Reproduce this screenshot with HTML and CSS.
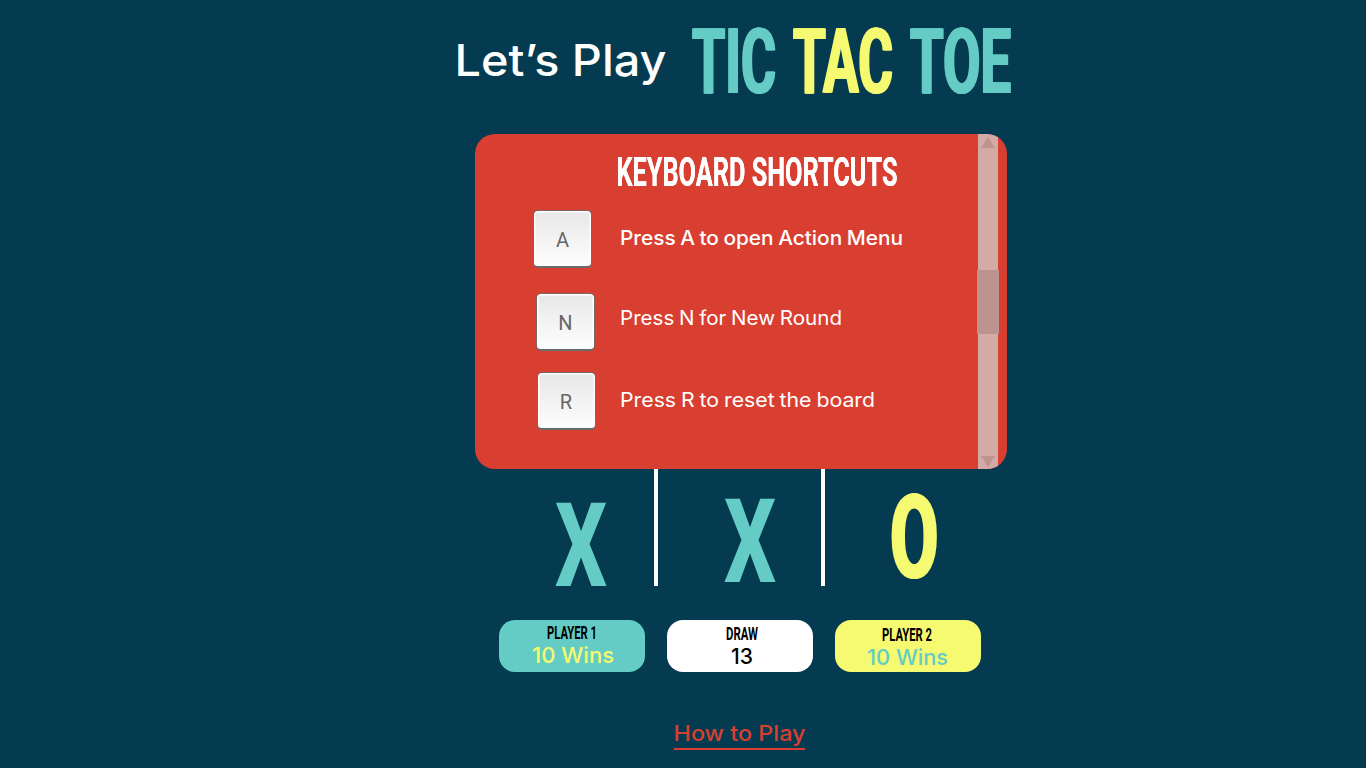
FILE: index.html
```html
<!DOCTYPE html>
<html lang="en">
<head>
<meta charset="utf-8">
<title>Tic Tac Toe</title>
<link rel="stylesheet" href="styles.css">
</head>
<body>
<main class="game">
  <header class="header">
    <svg class="greeting" viewBox="0 0 212 134"><text x="-1.5" y="76" textLength="212" lengthAdjust="spacingAndGlyphs">Let’s Play</text></svg>
    <svg class="logo display" viewBox="0 0 320 134">
      <text class="teal" x="0" y="93" textLength="84" lengthAdjust="spacingAndGlyphs">TIC</text>
      <text class="yellow" x="101" y="93" textLength="100" lengthAdjust="spacingAndGlyphs">TAC</text>
      <text class="teal" x="218" y="93" textLength="101" lengthAdjust="spacingAndGlyphs">TOE</text>
    </svg>
  </header>
  <section class="panel">
    <div class="content">
      <svg class="panel-title display" viewBox="0 0 282 76"><text x="-.5" y="52" textLength="281" lengthAdjust="spacingAndGlyphs">KEYBOARD SHORTCUTS</text></svg>
      <div class="shortcut first">
        <kbd class="key">A</kbd>
        <svg class="hint medium" viewBox="0 0 290 58"><text x="0" y="35" textLength="283" lengthAdjust="spacingAndGlyphs">Press A to open Action Menu</text></svg>
      </div>
      <div class="shortcut second">
        <kbd class="key">N</kbd>
        <svg class="hint" viewBox="0 0 290 58"><text x="0" y="32" textLength="222" lengthAdjust="spacingAndGlyphs">Press N for New Round</text></svg>
      </div>
      <div class="shortcut third">
        <kbd class="key">R</kbd>
        <svg class="hint" viewBox="0 0 290 58"><text x="0" y="35" textLength="255" lengthAdjust="spacingAndGlyphs">Press R to reset the board</text></svg>
      </div>
    </div>
    <div class="scrollbar">
      <svg class="arrow" viewBox="0 0 14 12"><path d="M7 1 14 12H0Z"/></svg>
      <div class="thumb"></div>
      <svg class="arrow" viewBox="0 0 14 12"><path d="M0 0H14L7 11Z"/></svg>
    </div>
  </section>
  <section class="board">
    <div class="cell left"><svg class="mark display" viewBox="0 0 52 117"><text class="teal" x="0" y="117" textLength="52" lengthAdjust="spacingAndGlyphs">X</text></svg></div>
    <div class="cell middle"><svg class="mark display" viewBox="0 0 52 117"><text class="teal" x="0" y="113" textLength="52" lengthAdjust="spacingAndGlyphs">X</text></svg></div>
    <div class="cell right"><svg class="mark round display" viewBox="0 0 52 117"><text class="yellow" x="-2" y="109" textLength="48.5" lengthAdjust="spacingAndGlyphs">O</text></svg></div>
  </section>
  <section class="scores">
    <svg class="score p1" viewBox="0 0 146 52"><text class="name" x="48" y="19" textLength="50" lengthAdjust="spacingAndGlyphs">PLAYER 1</text><text class="value" x="33" y="43" textLength="82" lengthAdjust="spacingAndGlyphs">10 Wins</text></svg>
    <svg class="score draw" viewBox="0 0 146 52"><text class="name" x="59" y="20" textLength="32" lengthAdjust="spacingAndGlyphs">DRAW</text><text class="value" x="64" y="44" textLength="22" lengthAdjust="spacingAndGlyphs">13</text></svg>
    <svg class="score p2" viewBox="0 0 146 52"><text class="name" x="47" y="21" textLength="50" lengthAdjust="spacingAndGlyphs">PLAYER 2</text><text class="value" x="32" y="45" textLength="81" lengthAdjust="spacingAndGlyphs">10 Wins</text></svg>
  </section>
  <a class="help"><svg viewBox="0 0 131 36"><text x="-.5" y="29" textLength="132" lengthAdjust="spacingAndGlyphs">How to Play</text></svg></a>
</main>
</body>
</html>
```
FILE: styles.css
```css
* { box-sizing: border-box; }
body { margin: 0; background: #053b50; font-family: Inter, "Open Sans", sans-serif; }
svg { display: block; flex: none; overflow: visible; }
.game { width: 1366px; height: 768px; overflow: hidden; }
.header { display: flex; height: 134px; padding-left: 456px; gap: 24px; }
.greeting { width: 212px; height: 134px; fill: #fff; font-size: 43.5px; font-weight: 480; }
.logo { width: 320px; height: 134px; font-size: 90px; }
.display { font-family: Roboto, sans-serif; font-weight: 700; }
.teal { fill: #64ccc5; --edge: #64ccc5; }
.yellow { fill: #f6fa70; --edge: #f6fa70; }
/* widens the vertical stems without thickening the bars */
.logo text, .round text { filter: drop-shadow(1px 0 0 var(--edge)) drop-shadow(-1px 0 0 var(--edge)); }
.panel { display: flex; width: 532px; height: 335px; margin-left: 475px; border-radius: 20px; background: #d83f31; overflow: hidden; }
.content { width: 502px; }
.panel-title { width: 282px; height: 76px; margin-left: 142px; fill: #fff; font-size: 41.5px; }
.panel-title text { filter: drop-shadow(.4px 0 0 #fff); }
.shortcut { display: flex; height: 58px; }
.first { padding-left: 58px; gap: 28px; margin-bottom: 25px; }
.second { padding-left: 61px; gap: 25px; margin-bottom: 21px; }
.third { padding-left: 61.5px; gap: 24.5px; }
.key { display: flex; align-items: center; justify-content: center; width: 59px; height: 58px; border: 1px solid #7a6765; border-bottom: 2px solid #686d6d; border-radius: 5px; background: linear-gradient(#e7e7e7, #fefefe); box-shadow: inset 0 0 0 1.5px #fff; color: #666; font: 400 20px Roboto, sans-serif; padding-top: 3px; }
.hint { width: 290px; height: 58px; fill: #fff; font-size: 20px; font-weight: 400; word-spacing: -1px; }
.medium { font-weight: 500; }
.scrollbar { display: flex; flex-direction: column; align-items: center; justify-content: space-between; width: 22px; height: 335px; padding: 2px 0 1px; background: linear-gradient(90deg, transparent 1px, #d3aaa6 1px, #d3aaa6 21px, transparent 21px); }
.arrow { width: 14px; height: 12px; fill: #bd938f; }
.thumb { width: 22px; height: 64px; background: #bd938f; }
.board { display: flex; height: 117px; padding-left: 490px; }
.cell { height: 117px; }
.left { width: 168px; padding-left: 65px; border-right: 4px solid #fff; }
.middle { width: 167px; padding-left: 66px; border-right: 4px solid #fff; }
.right { padding-left: 67px; }
.mark { width: 52px; height: 117px; font-size: 117px; font-weight: 800; }
.scores { display: flex; gap: 22px; margin: 34px 0 0 499px; }
.score { width: 146px; height: 52px; border-radius: 16px; }
.p1 { background: #64ccc5; }
.draw { background: #fff; }
.p2 { background: #f6fa70; }
.name { font: 700 18px Roboto, sans-serif; }
.value { font: 500 22px Inter, sans-serif; }
.p1 .value { fill: #f6fa70; }
.p2 .value { fill: #64ccc5; }
.help { display: block; width: 131px; height: 38px; margin: 40px 0 0 674px; border-bottom: 2px solid #d83f31; }
.help svg { width: 131px; height: 36px; fill: #d83f31; font-size: 22px; font-weight: 550; }
```
